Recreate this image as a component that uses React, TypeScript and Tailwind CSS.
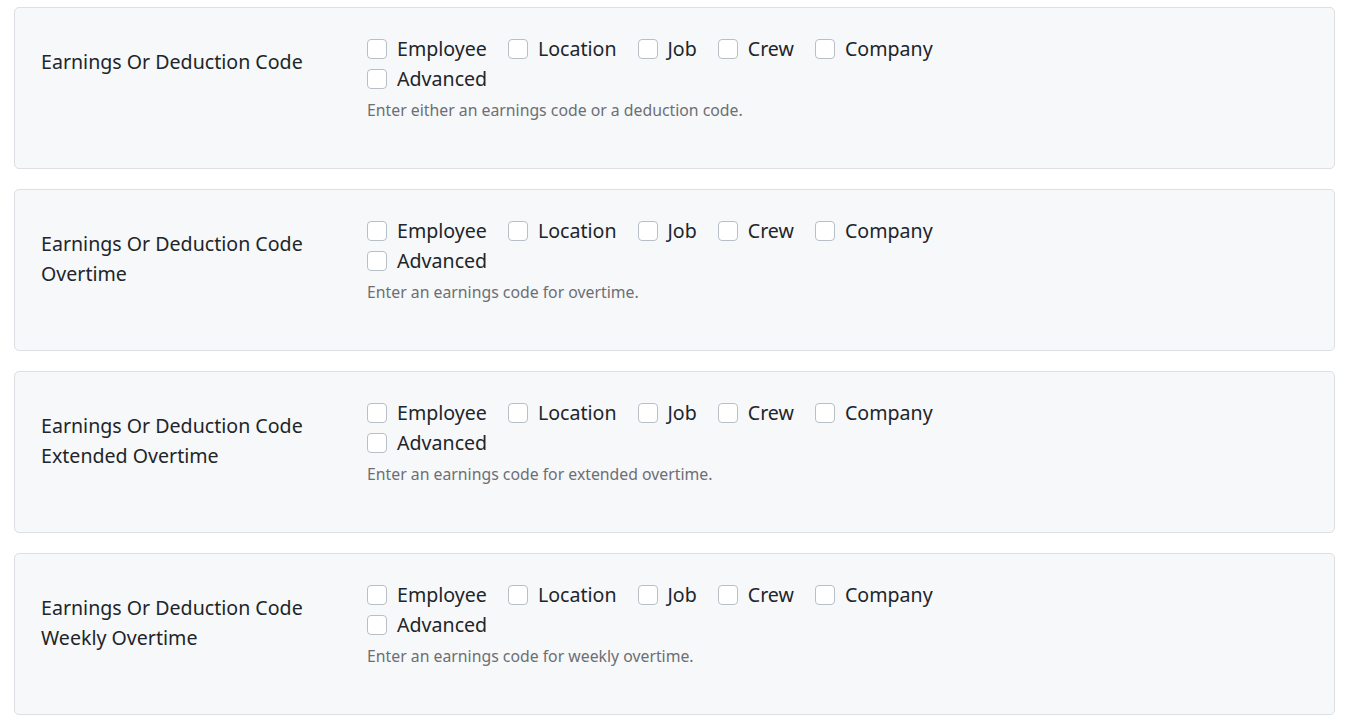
const options = ['Employee', 'Location', 'Job', 'Crew', 'Company', 'Advanced']

type Field = {
  label: string[]
  help: string
}

const fields: Field[] = [
  { label: ['Earnings Or Deduction Code'], help: 'Enter either an earnings code or a deduction code.' },
  { label: ['Earnings Or Deduction Code', 'Overtime'], help: 'Enter an earnings code for overtime.' },
  { label: ['Earnings Or Deduction Code', 'Extended Overtime'], help: 'Enter an earnings code for extended overtime.' },
  { label: ['Earnings Or Deduction Code', 'Weekly Overtime'], help: 'Enter an earnings code for weekly overtime.' },
]

const Check = ({ name }: { name: string }) => (
  <label className="flex items-center gap-[10px] mr-[21px] h-[30px]">
    <span className="w-[20px] h-[20px] rounded-[4px] border border-[#b8bfc6] bg-white" />
    <span>{name}</span>
  </label>
)

const FieldCard = ({ field }: { field: Field }) => (
  <div className="flex h-[162px] rounded-[5px] border border-[#dcdfe3] bg-[#f7f8fa] pl-[26px] pt-[26px]">
    <div className="w-[326px] pt-[13px] text-[19.6px] leading-[30px] text-[#212529]">
      {field.label.map((l) => (
        <div key={l}>{l}</div>
      ))}
    </div>
    <div className="flex flex-col">
      <div className="flex flex-wrap w-[600px] text-[19.6px] text-[#212529]">
        {options.map((o) => (
          <Check key={o} name={o} />
        ))}
      </div>
      <p className="mt-[6px] text-[15.8px] leading-[20px] text-[#6c6f73]">{field.help}</p>
    </div>
  </div>
)

export default function App() {
  return (
    <div
      className="min-h-screen bg-white pl-[14px] pr-[20px] pt-[7px] flex flex-col gap-[20px]"
      style={{ fontFamily: '"Noto Sans", sans-serif' }}
    >
      {fields.map((f, i) => (
        <FieldCard key={i} field={f} />
      ))}
    </div>
  )
}
